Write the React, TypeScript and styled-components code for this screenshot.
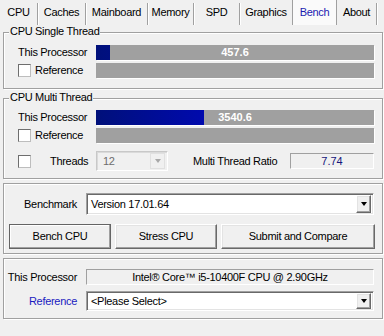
import React from 'react';
import styled, { createGlobalStyle, css } from 'styled-components';

const Global = createGlobalStyle`
  html, body { margin: 0; padding: 0; background: #f0f0f0; }
  body {
    font-family: 'Liberation Sans', Arial, sans-serif;
    font-size: 11px;
    line-height: 13px;
    letter-spacing: -0.3px;
    color: #000;
  }
  * { box-sizing: border-box; }
`;

const sunken = css`
  border: 1px solid;
  border-color: #a0a0a0 #ffffff #ffffff #a0a0a0;
  box-shadow: inset 1px 1px 0 #696969, inset -1px -1px 0 #e3e3e3;
`;

const flatSunken = css`
  border: 1px solid;
  border-color: #a0a0a0 #ffffff #ffffff #a0a0a0;
`;

const raised = css`
  border: 1px solid;
  border-color: #ffffff #696969 #696969 #ffffff;
  box-shadow: inset -1px -1px 0 #a0a0a0, inset 1px 1px 0 #e3e3e3;
`;

const Window = styled.div`
  width: 384px;
  height: 336px;
  overflow: hidden;
  background: #f0f0f0;
  display: flex;
  flex-direction: column;
`;

const TabBar = styled.div`
  display: flex;
  height: 25px;
`;

const Tab = styled.div<{ $w: number; $active?: boolean }>`
  width: ${(p) => p.$w}px;
  flex: none;
  display: flex;
  justify-content: center;
  align-items: flex-start;
  white-space: nowrap;
  ${(p) =>
    p.$active
      ? css`
          padding-top: 6px;
          background: #fafafa;
          border-left: 1px solid #a0a0a0;
          border-right: 1px solid #a0a0a0;
          color: #1a1ab0;
          margin-left: -1px;
        `
      : css`
          margin-top: 3px;
          padding-top: 3px;
          border-right: 1px solid #a0a0a0;
          box-shadow: 1px 0 0 #ffffff;
        `}
`;

const Content = styled.div`
  display: flex;
  flex-direction: column;
  padding: 0 1px 0 3px;
`;

const Group = styled.div<{ $mt: number; $pt: number; $pb: number }>`
  position: relative;
  margin-top: ${(p) => p.$mt}px;
  padding: ${(p) => p.$pt}px 8px ${(p) => p.$pb}px 14px;
  border: 1px solid #a0a0a0;
  box-shadow: inset 1px 1px 0 #ffffff, 1px 1px 0 #ffffff;
  display: flex;
  flex-direction: column;
`;

const Legend = styled.span`
  position: absolute;
  top: -8px;
  left: 5px;
  padding: 0 1px;
  background: #f0f0f0;
  white-space: nowrap;
`;

const BarRows = styled.div`
  display: flex;
  flex-direction: column;
  gap: 3px;
`;

const BarRow = styled.div`
  display: grid;
  grid-template-columns: 78px 1fr;
  align-items: center;
  height: 15px;
`;

const CheckLabel = styled.label`
  display: flex;
  align-items: center;
  gap: 4px;
  white-space: nowrap;
`;

const Box = styled.span`
  width: 13px;
  height: 13px;
  flex: none;
  background: #ffffff;
  border: 1px solid;
  border-color: #6e6e6e #bdbdbd #bdbdbd #6e6e6e;
`;

const Bar = styled.div`
  position: relative;
  height: 15px;
  background: #a0a0a0;
  box-shadow: 1px 1px 0 #ffffff;
`;

const Fill = styled.div`
  height: 100%;
  background-image: linear-gradient(to right, #00107a, #0000ff);
  background-repeat: no-repeat;
`;

const BarValue = styled.span`
  position: absolute;
  inset: 0;
  display: flex;
  align-items: center;
  justify-content: center;
  color: #ffffff;
  font-weight: bold;
  letter-spacing: 0;
`;

const ThreadsRow = styled.div`
  display: grid;
  grid-template-columns: 78px 72px auto 1fr;
  align-items: center;
  margin-top: 8px;
`;

const ThreadsLabel = styled.span`
  margin-left: 15px;
`;

const RatioLabel = styled.span`
  margin-left: 25px;
  white-space: nowrap;
`;

const RatioBox = styled.div`
  ${flatSunken};
  justify-self: end;
  width: 84px;
  height: 16px;
  display: flex;
  align-items: center;
  justify-content: center;
  color: #14147a;
  letter-spacing: 0;
`;

const Combo = styled.div<{ $h: number; $disabled?: boolean }>`
  height: ${(p) => p.$h}px;
  display: flex;
  align-items: center;
  justify-content: space-between;
  padding: 0 2px 0 4px;
  ${(p) =>
    p.$disabled
      ? css`
          border: 1px solid;
          border-color: #c8c8c8 #ffffff #ffffff #c8c8c8;
          box-shadow: inset 1px 1px 0 #dadada;
          background: #f0f0f0;
          color: #6d6d6d;
          padding-left: 6px;
        `
      : css`
          ${sunken};
          background: #ffffff;
        `}
`;

const DropBtn = styled.span<{ $h: number; $disabled?: boolean }>`
  width: 15px;
  height: ${(p) => p.$h}px;
  display: flex;
  align-items: center;
  justify-content: center;
  background: #f0f0f0;
  ${(p) =>
    p.$disabled
      ? css`
          border: 1px solid #e0e0e0;
        `
      : raised};
`;

const Arrow = styled.span<{ $disabled?: boolean }>`
  width: 0;
  height: 0;
  border-left: 3.5px solid transparent;
  border-right: 3.5px solid transparent;
  border-top: 4px solid ${(p) => (p.$disabled ? '#a8a8a8' : '#000000')};
`;

const FormGrid = styled.div<{ $gap: number }>`
  display: grid;
  grid-template-columns: 73px 1fr;
  column-gap: 9px;
  row-gap: ${(p) => p.$gap}px;
  align-items: center;
  margin-left: -14px;
`;

const FieldLabel = styled.span<{ $link?: boolean }>`
  text-align: right;
  white-space: nowrap;
  color: ${(p) => (p.$link ? '#1a1ac0' : '#000')};
`;

const ReadField = styled.div`
  ${flatSunken};
  height: 16px;
  display: flex;
  align-items: center;
  justify-content: center;
  white-space: nowrap;
`;

const Buttons = styled.div`
  display: grid;
  grid-template-columns: 102px 102px 1fr;
  gap: 4px;
  margin: 9px -1px 0 -9px;
`;

const Button = styled.button<{ $default?: boolean }>`
  font: inherit;
  letter-spacing: inherit;
  color: #000;
  height: 25px;
  background: #f0f0f0;
  ${raised};
  ${(p) =>
    p.$default &&
    css`
      border-color: #646464;
      box-shadow: inset -1px -1px 0 #a0a0a0, inset 1px 1px 0 #ffffff;
    `}
`;

const tabs = [
  { label: 'CPU', w: 38 },
  { label: 'Caches', w: 48 },
  { label: 'Mainboard', w: 62 },
  { label: 'Memory', w: 46 },
  { label: 'SPD', w: 46 },
  { label: 'Graphics', w: 53 },
  { label: 'Bench', w: 45, active: true },
  { label: 'About', w: 40 },
];

function ScoreBar({ pct, value }: { pct: number; value?: string }) {
  return (
    <Bar>
      {pct > 0 && (
        <Fill style={{ width: `${pct}%`, backgroundSize: `${(100 / pct) * 100}% 100%` }} />
      )}
      {value && <BarValue>{value}</BarValue>}
    </Bar>
  );
}

function Select({ value, h, disabled }: { value: string; h: number; disabled?: boolean }) {
  return (
    <Combo $h={h} $disabled={disabled}>
      <span>{value}</span>
      <DropBtn $h={h - 4} $disabled={disabled}>
        <Arrow $disabled={disabled} />
      </DropBtn>
    </Combo>
  );
}

export default function App() {
  return (
    <Window>
      <Global />
      <TabBar>
        {tabs.map((t) => (
          <Tab key={t.label} $w={t.w} $active={t.active}>
            {t.label}
          </Tab>
        ))}
      </TabBar>
      <Content>
        <Group $mt={7} $pt={12} $pb={10}>
          <Legend>CPU Single Thread</Legend>
          <BarRows>
            <BarRow>
              <span>This Processor</span>
              <ScoreBar pct={5} value="457.6" />
            </BarRow>
            <BarRow>
              <CheckLabel>
                <Box />
                Reference
              </CheckLabel>
              <ScoreBar pct={0} />
            </BarRow>
          </BarRows>
        </Group>

        <Group $mt={9} $pt={11} $pb={7}>
          <Legend>CPU Multi Thread</Legend>
          <BarRows>
            <BarRow>
              <span>This Processor</span>
              <ScoreBar pct={39} value="3540.6" />
            </BarRow>
            <BarRow>
              <CheckLabel>
                <Box />
                Reference
              </CheckLabel>
              <ScoreBar pct={0} />
            </BarRow>
          </BarRows>
          <ThreadsRow>
            <CheckLabel>
              <Box />
              <ThreadsLabel>Threads</ThreadsLabel>
            </CheckLabel>
            <Select value="12" h={20} disabled />
            <RatioLabel>Multi Thread Ratio</RatioLabel>
            <RatioBox>7.74</RatioBox>
          </ThreadsRow>
        </Group>

        <Group $mt={4} $pt={9} $pb={4}>
          <FormGrid $gap={0}>
            <FieldLabel>Benchmark</FieldLabel>
            <Select value="Version 17.01.64" h={22} />
          </FormGrid>
          <Buttons>
            <Button $default>Bench CPU</Button>
            <Button>Stress CPU</Button>
            <Button>Submit and Compare</Button>
          </Buttons>
        </Group>

        <Group $mt={4} $pt={10} $pb={7}>
          <FormGrid $gap={6}>
            <FieldLabel>This Processor</FieldLabel>
            <ReadField>Intel® Core™ i5-10400F CPU @ 2.90GHz</ReadField>
            <FieldLabel $link>Reference</FieldLabel>
            <Select value="<Please Select>" h={20} />
          </FormGrid>
        </Group>
      </Content>
    </Window>
  );
}
